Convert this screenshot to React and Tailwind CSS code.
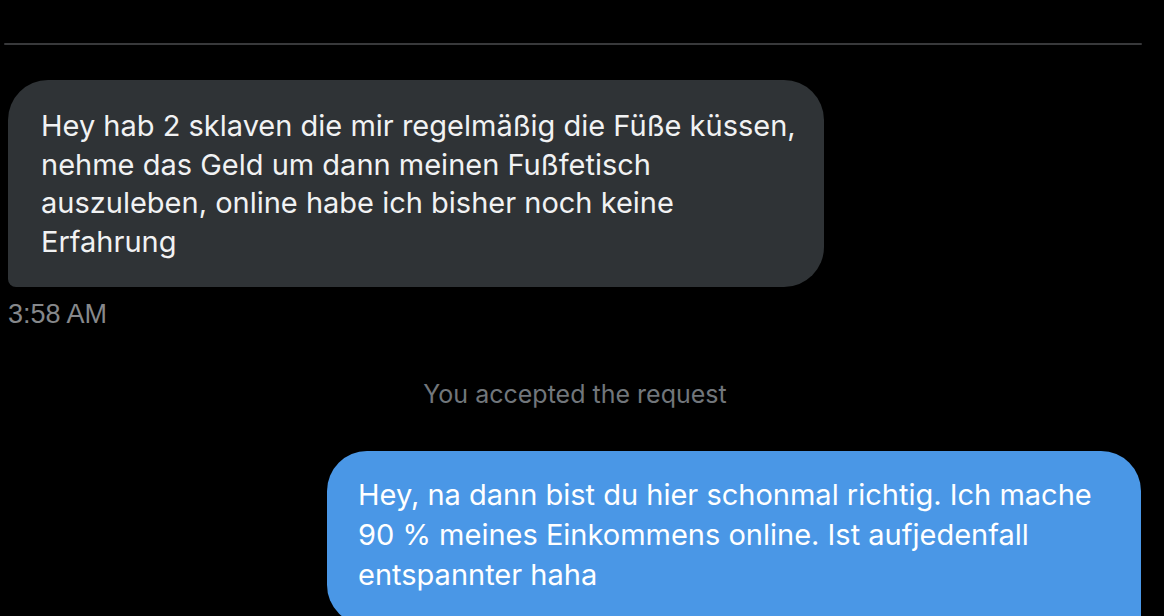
import React from 'react';

const App = () => {
  return (
    <div className="w-[1164px] h-[616px] overflow-hidden bg-black" style={{ fontFamily: 'Inter, "Liberation Sans", sans-serif' }}>
      <div className="pt-[43px] pl-[4px] pr-[22px]">
        <div className="h-[2px] rounded-full bg-[#38393b]" />
      </div>

      <div className="mt-[35px] pl-[8px]">
        <div className="w-[816px] rounded-[40px] rounded-bl-[8px] bg-[#2f3336] pl-[33px] pr-[10px] pt-[27px] pb-[26px] text-[29px] leading-[38.5px] text-[#f1f2f3]">
          Hey hab 2 sklaven die mir regelmäßig die Füße küssen, nehme das Geld um dann meinen Fußfetisch auszuleben, online habe ich bisher noch keine Erfahrung
        </div>
        <div className="mt-[12px] text-[27px] leading-[30px] text-[#86888b]" style={{ fontFamily: '"Liberation Sans", Arial, sans-serif' }}>
          3:58 AM
        </div>
      </div>

      <div className="mt-[50px] pr-[14px] text-center text-[25px] leading-[30px] text-[#71767b]">
        You accepted the request
      </div>

      <div className="mt-[42px] flex justify-end pr-[23px]">
        <div className="w-[814px] rounded-[40px] rounded-br-[8px] bg-[#4a97e6] pl-[31px] pr-[40px] pt-[24px] pb-[30px] text-[29px] leading-[40px] text-white">
          Hey, na dann bist du hier schonmal richtig. Ich mache 90 % meines Einkommens online. Ist aufjedenfall entspannter haha
        </div>
      </div>
    </div>
  );
};

export default App;
